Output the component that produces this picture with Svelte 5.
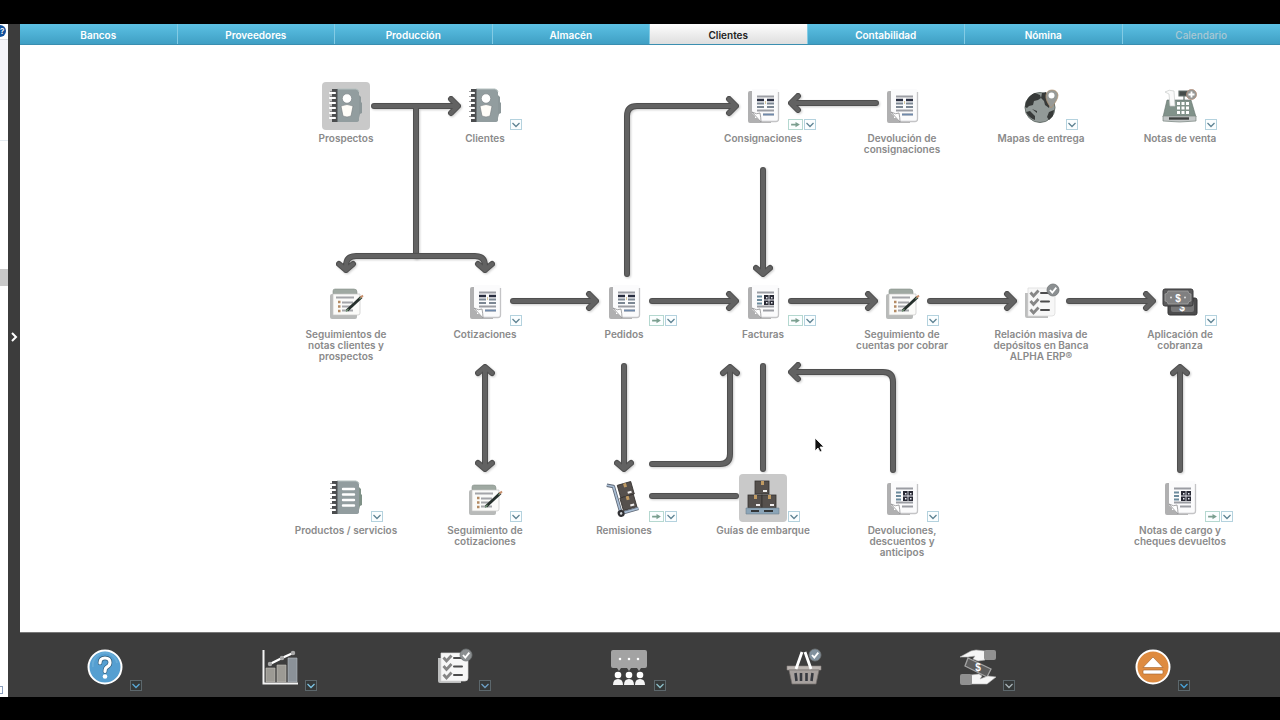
<script lang="ts">
  type Kind = "contact" | "catalog" | "doc" | "qrdoc" | "notes" | "checklist" | "cash" | "truck" | "pallet" | "globe" | "register"
    | "help" | "chart" | "meeting" | "basket" | "payment" | "eject";
  type FlowNode = { label: string; icon: Kind; col: number; row: number; menu?: boolean; go?: boolean; tile?: boolean };

  const tabs = ["Bancos", "Proveedores", "Producción", "Almacén", "Clientes", "Contabilidad", "Nómina", "Calendario"];
  let active = $state("Clientes");

  // Flow chart grid: columns and rows are evenly spaced on the canvas.
  const COL_X = 326, COL_STEP = 139, ROW_Y = 37, ROW_STEP = 196;

  const nodes: FlowNode[] = [
    { label: "Prospectos", icon: "contact", col: 0, row: 0, tile: true },
    { label: "Clientes", icon: "contact", col: 1, row: 0, menu: true },
    { label: "Consignaciones", icon: "doc", col: 3, row: 0, menu: true, go: true },
    { label: "Devolución de consignaciones", icon: "doc", col: 4, row: 0 },
    { label: "Mapas de entrega", icon: "globe", col: 5, row: 0, menu: true },
    { label: "Notas de venta", icon: "register", col: 6, row: 0, menu: true },
    { label: "Seguimientos de notas clientes y prospectos", icon: "notes", col: 0, row: 1 },
    { label: "Cotizaciones", icon: "doc", col: 1, row: 1, menu: true },
    { label: "Pedidos", icon: "doc", col: 2, row: 1, menu: true, go: true },
    { label: "Facturas", icon: "qrdoc", col: 3, row: 1, menu: true, go: true },
    { label: "Seguimiento de cuentas por cobrar", icon: "notes", col: 4, row: 1, menu: true },
    { label: "Relación masiva de depósitos en Banca ALPHA ERP®", icon: "checklist", col: 5, row: 1 },
    { label: "Aplicación de cobranza", icon: "cash", col: 6, row: 1, menu: true },
    { label: "Productos / servicios", icon: "catalog", col: 0, row: 2, menu: true },
    { label: "Seguimiento de cotizaciones", icon: "notes", col: 1, row: 2, menu: true },
    { label: "Remisiones", icon: "truck", col: 2, row: 2, menu: true, go: true },
    { label: "Guías de embarque", icon: "pallet", col: 3, row: 2, menu: true, tile: true },
    { label: "Devoluciones, descuentos y anticipos", icon: "qrdoc", col: 4, row: 2, menu: true },
    { label: "Notas de cargo y cheques devueltos", icon: "qrdoc", col: 6, row: 2, menu: true, go: true },
  ];

  const tools: { icon: Kind; name: string; menu: boolean; tone?: string }[] = [
    { icon: "help", name: "Ayuda", menu: true, tone: "#5aa9d6" },
    { icon: "chart", name: "Reportes", menu: true, tone: "#7cc4e4" },
    { icon: "checklist", name: "Pendientes", menu: true, tone: "#6d9fc4" },
    { icon: "meeting", name: "Reuniones", menu: true, tone: "#8dbfc8" },
    { icon: "basket", name: "Compras", menu: false },
    { icon: "payment", name: "Pagos", menu: true, tone: "#a9b4b8" },
    { icon: "eject", name: "Salir", menu: true, tone: "#4aa3d8" },
  ];

  const right = (x: number, y: number) => `M${x - 7} ${y - 7}L${x} ${y}L${x - 7} ${y + 7}`;
  const left = (x: number, y: number) => `M${x + 7} ${y - 7}L${x} ${y}L${x + 7} ${y + 7}`;
  const down = (x: number, y: number) => `M${x - 7} ${y - 6}L${x} ${y}L${x + 7} ${y - 6}`;
  const up = (x: number, y: number) => `M${x - 7} ${y + 6}L${x} ${y}L${x + 7} ${y + 6}`;

  const arrows = [
    "M354 61H437" + right(438, 61) + "M396 61V211",
    "M326 225V221Q326 211 336 211H455Q465 211 465 221V225" + down(326, 225) + down(465, 225),
    "M607 229V71Q607 61 617 61H715" + right(716, 61),
    "M856 58H772" + left(771, 58),
    "M743 125V228" + down(743, 229),
    "M493 256H575" + right(576, 256),
    "M632 256H715" + right(716, 256),
    "M771 256H854" + right(855, 256),
    "M910 256H993" + right(994, 256),
    "M1049 256H1132" + right(1133, 256),
    "M465 323V423" + up(465, 322) + down(465, 424),
    "M604 321V423" + down(604, 424),
    "M632 419H700Q710 419 710 409V323" + up(710, 322),
    "M743 321V424",
    "M632 451H716",
    "M873 425V337Q873 327 863 327H772" + left(771, 327),
    "M1160 425V323" + up(1160, 322),
  ];
</script>

{#snippet chevron()}
  <svg class="chev" viewBox="0 0 10 8" aria-hidden="true"><path d="M1.5 2L5 5.5L8.5 2" /></svg>
{/snippet}

{#snippet badge(x: number, y: number, fill: string)}
  <circle cx={x} cy={y} r="6" {fill} stroke="#707475" stroke-width=".8" />
  <path d="M{x - 3} {y}l2.3 2.6l4-5" fill="none" stroke="#fff" stroke-width="1.8" />
{/snippet}

{#snippet carton(x: number, y: number)}
  <rect {x} {y} width="14" height="13" fill="#55504d" stroke="#34312f" stroke-width=".8" />
  <path d="M{x + 6} {y}h3v4h-3z" fill="#c09a62" />
  <path d="M{x + 8} {y + 9}h4v2h-4z" fill="#f0eeee" />
{/snippet}

{#snippet picture(kind: Kind)}
  <svg class="pic" viewBox="0 0 36 36" aria-hidden="true">
    {#if kind === "contact" || kind === "catalog"}
      <path d="M30 6l3 3v5l1 1v10l-2 1l-1 4h-2z" fill={kind === "contact" ? "#8c9799" : "#7f9187"} />
      <path d="M8 1h20q3 1 3 3v28q0 2-3 2H8z" fill="#929d9f" />
      <path d="M9 1h19q3 1 3 3" fill="none" stroke="#b4c0bf" />
      <path d="M4 1h5v33H4z" fill="#4b4d4f" />
      <path d="M9.500 1v33" stroke="#6d7578" />
      <path d="M2 5h5M2 10h5M2 15h5M2 20h5M2 25h5M2 30h5" stroke="#fff" stroke-width="2.2" stroke-linecap="round" />
      <path d="M2 3.500h5M2 8.500h5M2 13.500h5M2 18.500h5M2 23.500h5M2 28.500h5" stroke="#5f5f62" stroke-width=".6" />
      {#if kind === "contact"}
        <circle cx="19" cy="10.500" r="4.700" fill="#fff" stroke="#737b7d" stroke-width=".6" />
        <path d="M13 18q6-3 12 0l-2 10q-4 2-8 0z" fill="#fffdf8" stroke="#737b7d" stroke-width=".6" />
      {:else}
        <path d="M15 9h11M15 14.500h11M15 20h11M15 25.500h11" stroke="#fff" stroke-width="2.4" stroke-linecap="round" />
      {/if}
    {:else if kind === "doc" || kind === "qrdoc"}
      <path d="M5 3h5v27h16v5H5q-2 0-2-2V5q0-2 2-2z" fill="#b0b0b1" />
      <path d="M7 1h24q3 0 3 3v27q0 3-3 3H16l-9-9z" fill="#fbfbfc" />
      <path d="M33.500 4v27q0 2.500-2.500 2.500H16" fill="none" stroke="#c4c4c6" stroke-width="1.3" />
      <path d="M7 24q5 3 8 1q1 5 1 9z" fill="#fff" stroke="#8e8e90" stroke-width=".8" />
      <path d="M12 8.500h17M12 22.500h17M18 26.500h11" stroke="#9b9da3" stroke-width="1.8" />
      {#if kind === "doc"}
        <path d="M12 12h7M22 12h7" stroke="#292e40" stroke-width="2.6" />
        <path d="M12 15.500h7M22 15.500h7M12 19h7M22 19h7" stroke="#7c8793" stroke-width="1.8" />
        <path d="M20.500 13v3" stroke="#d8c9a0" stroke-width="1" />
        <path d="M18 26.500h11" stroke="#6f89ab" stroke-width="1.6" />
      {:else}
        <path d="M12 12.500h5M12 16h5M12 19.500h5" stroke="#6b8a9c" stroke-width="1.8" />
        <path d="M19 11h10v10H19z" fill="#292a35" />
        <path d="M21 13h1.500v1.500H21zM26 13h1.500v1.500H26zM21 18h1.500v1.500H21zM26 18h1.500v1.500H26zM23.600 11h.8v4.600h4.600v.8h-4.600v4.600h-.8v-4.600h-4.600v-.8h4.600z" fill="#e9eaf2" />
      {/if}
    {:else if kind === "notes"}
      <path d="M2 12q0-2 2-2h25v23q0 2-2 2H4q-2 0-2-2z" fill="#b8bab9" />
      <path d="M5 10V7q0-2 2-2h19q3 0 3 3v3z" fill="#9fa9a2" stroke="#88928b" stroke-width=".6" />
      <path d="M5 10h27v19q0 2-2 2H5z" fill="#fbfbf9" stroke="#c6c6c4" stroke-width=".7" />
      <path d="M8 13.500h18M14 18.500h11M14 22.500h9M14 26.500h11" stroke="#a4a5a9" stroke-width="1.8" />
      <path d="M10 18h2.500M10 22.500h2.500M10 27h2.500" stroke="#b38a63" stroke-width="2.4" />
      <path d="M19 26.500L33.500 13" stroke="#26302c" stroke-width="3" />
      <path d="M18 27.500l2.500-2.500M31.500 15l1.500-1.500" stroke="#6e9273" stroke-width="1.2" />
      <path d="M32.500 13.500l2.500-2" stroke="#c88f6b" stroke-width="2" />
    {:else if kind === "checklist"}
      <path d="M2 9h23v25H4q-2 0-2-2z" fill="#bdbebe" />
      <path d="M5 4h22q5 0 5 4v21q0 3-3 3H5z" fill="#f7f7f7" stroke="#d8d8d8" stroke-width=".7" />
      <path d="M18 9h8M18 17.500h8M18 26h8" stroke="#4c4c4d" stroke-width="2" stroke-linecap="round" />
      <path d="M7.500 8.500l3 3.500l5-5.500M7.500 17l3 3.500l5-5.500M7.500 25.500l3 3.500l5-5.500" fill="none" stroke="#868686" stroke-width="2.8" />
      {@render badge(30, 6, "#8b8f91")}
    {:else if kind === "cash"}
      <rect x="6" y="14" width="29" height="17" rx="2" fill="#4c4c4d" stroke="#353536" />
      <rect x="9" y="17" width="23" height="11" rx="2" fill="#777778" />
      <text class="money" x="20" y="27">$</text>
      <rect x="1" y="5" width="30" height="17" rx="2" fill="#5b5b5c" stroke="#39393a" />
      <path d="M6 7h20q0 3 3 3v7q-3 0-3 3H6q0-3-3-3v-7q3 0 3-3z" fill="#808081" stroke="#b0b0b0" stroke-width=".6" />
      <path d="M9 13.500h0M23 13.500h0" stroke="#ddd" stroke-width="2" stroke-linecap="round" />
      <text class="money" x="16" y="18">$</text>
    {:else if kind === "truck"}
      <g transform="rotate(-16 18 18)">
        {@render carton(15, 4)}
        {@render carton(14, 17)}
        <path d="M5 1l6 3v28h18" fill="none" stroke="#5f6876" stroke-width="3.4" stroke-linejoin="round" />
        <path d="M5 1l6 3v28h18" fill="none" stroke="#a8bdd4" stroke-width="1.7" stroke-linejoin="round" />
        <circle cx="11" cy="32" r="3.500" fill="#303034" />
        <circle cx="11" cy="32" r="1.300" fill="#d4d8dc" />
      </g>
    {:else if kind === "pallet"}
      {@render carton(10, 1)}
      {@render carton(3, 15)}
      {@render carton(17, 15)}
      <path d="M1 28h33v6H1z" fill="#8ba4b7" stroke="#70828e" stroke-width=".6" />
      <path d="M6 30h8v2H6zM19 30h9v2h-9z" fill="#323537" />
    {:else if kind === "globe"}
      <circle cx="17" cy="19.500" r="15" fill="#929a98" stroke="#67706c" stroke-width="1" />
      <path d="M3 14q3-7 9-9l5 2l1 3l-3 2l-4 1l-1 4l-4 1l-2 2l-2-1zM19 5l4-1l3 5l1 7l-1 4l-4-3l-1-4l-3-3zM26 24l5-2l-1 6l-4 4l-2-3zM3 24l4-1l5 5v4q-6-2-9-8zM9 21l5 2v2z" fill="#373a39" />
      <path d="M28 20q-6-8-5-13q1-5 6-5t6 5q0 5-7 13z" fill="#979a97" stroke="#b0916f" stroke-width=".7" />
      <circle cx="28.500" cy="7.500" r="3" fill="#fff" />
    {:else if kind === "register"}
      <path d="M5 12h24l5 17H1z" fill="#81928a" stroke="#63716b" stroke-width=".6" />
      <path d="M1 28h33v5q-16 2-33 0z" fill="#c3c7c7" stroke="#788580" stroke-width=".7" />
      <path d="M7 30.500h20" stroke="#3e4140" stroke-width="2.4" />
      <path d="M3 4q4-3 9-1l1 15H8L7 6z" fill="#fafafa" stroke="#c8cbca" stroke-width=".7" />
      <path d="M17 3h9v5h-9zM22 8v4" fill="#454b49" stroke="#66716d" stroke-width="1.2" />
      <path d="M15 15.500h12M15 20h12M15 24.500h12" stroke="#fff" stroke-width="2.8" stroke-dasharray="3 1.5" />
      <circle cx="29.500" cy="6.500" r="5" fill="#969896" stroke="#b18c76" stroke-width=".8" />
      <path d="M26.500 6.500h6M29.500 3.500v6" stroke="#fff" stroke-width="1.8" />
    {:else if kind === "help"}
      <circle cx="18" cy="18" r="16.500" fill="#559fd1" stroke="#fff" stroke-width="2" />
      <path d="M6 18a12 12 0 0 1 24-4" fill="none" stroke="#78b7de" stroke-width="2" opacity=".5" />
      <path d="M13 14q0-5 5-5t5 4.500q0 3-3 4.500q-2 1-2 4.500" fill="none" stroke="#2c5a78" stroke-width="4.500" stroke-linecap="round" />
      <path d="M13 14q0-5 5-5t5 4.500q0 3-3 4.500q-2 1-2 4.500" fill="none" stroke="#fff" stroke-width="3.2" stroke-linecap="round" />
      <circle cx="18" cy="27.500" r="2.300" fill="#fff" />
    {:else if kind === "chart"}
      <path d="M1.500 1v33.500H36" fill="none" stroke="#f4f4f4" stroke-width="2" />
      <path d="M4 19h9v14H4zM15 16h9v17h-9z" fill="#9c9a94" stroke="#c4c1ba" stroke-width=".6" />
      <path d="M26 9h9v24h-9z" fill="#8b9299" stroke="#b7bec4" stroke-width=".6" />
      <path d="M8 15L20 9L31 4" fill="none" stroke="#fff" stroke-width="2.4" />
      <path d="M8 15h0M20 9h0M31 4h0" stroke="#aaa" stroke-width="4.500" stroke-linecap="round" />
    {:else if kind === "meeting"}
      <path d="M2 1h32q2 0 2 2v14q0 2-2 2h-4l-2 3l-2-3h-6l-2 3l-2-3h-6l-2 3l-2-3H2q-2 0-2-2V3q0-2 2-2z" fill="#a3a3a3" />
      <path d="M9 10h0M18 10h0M27 10h0" stroke="#fff" stroke-width="2.6" stroke-linecap="round" />
      {#each [7, 18, 29] as x (x)}
        <circle cx={x} cy="26" r="3.300" fill="#fff" />
        <path d="M{x - 5} 36q0-6 5-6t5 6z" fill="#f3f3f3" />
      {/each}
    {:else if kind === "basket"}
      <path d="M1 17h34v4H1z" fill="#bcb6b2" stroke="#8b8582" stroke-width=".6" />
      <path d="M3 21h30l-3 14H6z" fill="#a7a19e" stroke="#77716f" stroke-width=".7" />
      <path d="M9.500 24l1 8M15 24v8M20.500 24v8M26.500 24l-1 8" stroke="#373a40" stroke-width="2.6" />
      <path d="M10 20L16 3M25 20L19 3" stroke="#fff" stroke-width="2.8" />
      {@render badge(29, 6, "#81919e")}
    {:else if kind === "payment"}
      <path d="M8 9l23 11l-4 8L5 17z" fill="#5c5c5c" stroke="#a4a4a4" stroke-width="1.300" />
      <text class="money" x="18" y="22">$</text>
      <path d="M0 8l11-6l5-1l9 1v9l-7 1l-5-2l2-3l-7 1z" fill="#f6f6f6" stroke="#b8b8b8" stroke-width=".6" />
      <rect x="24" y="1" width="12" height="10" rx="2" fill="#919191" />
      <path d="M11 26l8-1l3 2l-2 3l8-3l8 1l-9 7H11z" fill="#f6f6f6" stroke="#b8b8b8" stroke-width=".6" />
      <rect x="0" y="25" width="12" height="11" rx="2" fill="#919191" />
    {:else}
      <circle cx="18" cy="18" r="16.500" fill="#de8b40" stroke="#fff" stroke-width="2" />
      <path d="M18 8l10 10.500H8z" fill="#fff" stroke="#a06028" stroke-width=".6" stroke-linejoin="round" />
      <rect x="8" y="21" width="20" height="4" rx="1" fill="#fff" stroke="#a06028" stroke-width=".6" />
    {/if}
  </svg>
{/snippet}

<div class="screen">
  <aside class="side">
    <button class="side-help" aria-label="Ayuda del panel">?</button>
    <div class="side-head"></div>
    <div class="side-rule"></div>
    <div class="side-thumb"></div>
    <div class="side-box"></div>
  </aside>
  <button class="splitter" aria-label="Mostrar panel">
    <svg viewBox="0 0 12 12" aria-hidden="true"><path d="M4 2l4 4l-4 4" /></svg>
  </button>

  <main>
    <nav class="tabs">
      {#each tabs as tab (tab)}
        <button class="tab" class:active={tab === active} class:dim={tab === "Calendario"} onclick={() => (active = tab)}>{tab}</button>
      {/each}
    </nav>

    <section class="canvas" aria-label="Flujo de clientes">
      <svg class="arrows" viewBox="0 0 1260 587" aria-hidden="true">
        {#each arrows as d (d)}
          <path class="edge" {d} />
          <path class="core" {d} />
        {/each}
      </svg>

      {#each nodes as n (n.label)}
        <div class="node" style="left:{COL_X + n.col * COL_STEP}px; top:{ROW_Y + n.row * ROW_STEP}px">
          <button class="open">
            <span class="tile" class:shaded={n.tile}>{@render picture(n.icon)}</span>
            <span class="label">{n.label}</span>
          </button>
          {#if n.menu}
            <div class="minis">
              {#if n.go}
                <button class="mini go" aria-label="Ir a {n.label}">
                  <svg viewBox="0 0 12 8" aria-hidden="true"><path d="M1 3h5V1l5 3l-5 3V5H1z" /></svg>
                </button>
              {/if}
              <button class="mini" aria-label="Menú de {n.label}">{@render chevron()}</button>
            </div>
          {/if}
        </div>
      {/each}

      <svg class="cursor" viewBox="0 0 12 18" aria-hidden="true">
        <path d="M2 1v13l3-3l2 4l2-1l-2-4h4z" fill="#111" stroke="#fff" stroke-width=".8" />
      </svg>
    </section>

    <footer class="toolbar">
      {#each tools as t (t.name)}
        <div class="tool">
          <button class="open" aria-label={t.name}>{@render picture(t.icon)}</button>
          {#if t.menu}
            <button class="mini dark" style="color:{t.tone}" aria-label="Menú de {t.name}">{@render chevron()}</button>
          {/if}
        </div>
      {/each}
    </footer>
  </main>
</div>

<style>
  :global(body) { background: #000; }
  button { border: 0; padding: 0; background: none; font: inherit; color: inherit; cursor: pointer; }
  svg { display: block; }
  .screen {
    display: flex; box-sizing: border-box; min-height: 100vh; padding: 24px 0 23px; overflow: hidden;
    font-family: Inter, "Open Sans", sans-serif; font-size: 10px; font-weight: 600; line-height: 11px;
  }

  .side { width: 8px; flex: none; overflow: hidden; display: flex; flex-direction: column; background: #fff; }
  .side-help {
    width: 6px; height: 12px; margin: 1px 0 2px; flex: none; border-radius: 0 6px 6px 0;
    background: #12509b; color: #fff; font-size: 8px; line-height: 12px; text-align: left;
  }
  .side-head { height: 60px; border-top: 1px solid #dcdde2; background: #f3f3f8; }
  .side-rule { height: 40px; border-bottom: 1px solid #e3eaf0; }
  .side-thumb { height: 17px; margin-top: 128px; background: #c9c9c9; }
  .side-box { width: 5px; height: 6px; margin: auto 0 3px -4px; border: 1px solid #8b9fbd; }
  .splitter { width: 12px; flex: none; background: #3c3c3c; display: flex; align-items: center; }
  .splitter svg { width: 12px; height: 12px; margin-top: -48px; }
  .splitter path { fill: none; stroke: #fff; stroke-width: 2; }

  main { flex: 1; min-width: 0; display: flex; flex-direction: column; background: #fff; }
  .tabs { display: grid; grid-template-columns: repeat(8, 1fr); height: 21px; background: linear-gradient(#5cc1e4, #3f9fc4); border-bottom: 1px solid #3a8eb0; box-sizing: border-box; }
  .tab { color: #fff; border-right: 1px solid #83cbe4; text-align: center; padding-top: 2px; }
  .tab:last-child { border-right: 0; }
  .tab.active { color: #222; background: linear-gradient(#fdfdfd, #dedede); }
  .tab.dim { color: #a9c8d3; font-weight: 500; }

  .canvas { position: relative; flex: 1; min-height: 587px; overflow: hidden; }
  .arrows { width: 1260px; height: 587px; }
  .arrows path { fill: none; stroke-linecap: round; stroke-linejoin: round; }
  .edge { stroke: #4f4f4f; stroke-width: 6; filter: drop-shadow(1px 1px 1px rgba(0, 0, 0, 0.2)); }
  .core { stroke: #626262; stroke-width: 4; }

  .node { position: absolute; width: 106px; margin-left: -53px; }
  .open { display: flex; flex-direction: column; align-items: center; }
  .node .open { width: 100%; gap: 3px; }
  .tile { display: flex; align-items: center; justify-content: center; width: 48px; height: 48px; border-radius: 4px; }
  .tile.shaded { background: #c9c9c9; }
  .label { color: #8a8a8a; text-align: center; }
  .pic { width: 36px; height: 36px; overflow: visible; }
  .money { font: 700 10px "Liberation Sans", sans-serif; fill: #fff; text-anchor: middle; }

  .minis { position: absolute; left: 78px; top: 37px; display: flex; gap: 1px; }
  .mini {
    display: flex; align-items: center; justify-content: center; box-sizing: border-box;
    width: 12px; height: 11px; border: 1px solid #b4d2de; background: #fbfeff; color: #5f8494;
  }
  .mini.go { width: 15px; border-color: #b5d8d0; }
  .mini.go svg { width: 11px; height: 7px; fill: #7b9f90; }
  .chev { width: 10px; height: 8px; flex: none; }
  .chev path { fill: none; stroke: currentColor; stroke-width: 1.3; }
  .cursor { position: absolute; left: 793px; top: 392px; width: 12px; height: 18px; }

  .toolbar {
    display: flex; justify-content: space-between; height: 65px; box-sizing: border-box;
    padding: 16px 109px 0 67px; background: #3d3d3d; border-top: 1px solid #777;
  }
  .tool { position: relative; width: 36px; }
  .mini.dark { position: absolute; left: 43px; top: 31px; border-color: #5c676c; background: #343838; }
</style>
